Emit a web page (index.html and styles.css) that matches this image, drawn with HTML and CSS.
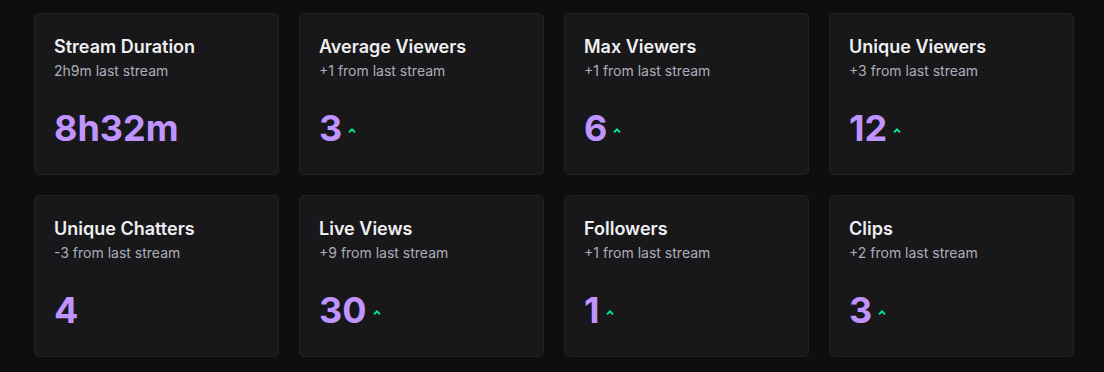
FILE: index.html
```html
<!DOCTYPE html>
<html>
<head>
<meta charset="utf-8">
<link rel="stylesheet" href="styles.css">
</head>
<body>
<div class="grid">
  <div class="card">
    <div class="title">Stream Duration</div>
    <div class="sub">2h9m last stream</div>
    <div class="value"><span class="num">8h32m</span></div>
  </div>
  <div class="card">
    <div class="title">Average Viewers</div>
    <div class="sub">+1 from last stream</div>
    <div class="value"><span class="num">3</span><svg class="up" viewBox="0 0 8 5" width="8" height="5"><path d="M1 4.3 L4 1.3 L7 4.3" fill="none" stroke="currentColor" stroke-width="1.7"/></svg></div>
  </div>
  <div class="card">
    <div class="title">Max Viewers</div>
    <div class="sub">+1 from last stream</div>
    <div class="value"><span class="num">6</span><svg class="up" viewBox="0 0 8 5" width="8" height="5"><path d="M1 4.3 L4 1.3 L7 4.3" fill="none" stroke="currentColor" stroke-width="1.7"/></svg></div>
  </div>
  <div class="card">
    <div class="title">Unique Viewers</div>
    <div class="sub">+3 from last stream</div>
    <div class="value"><span class="num">12</span><svg class="up" viewBox="0 0 8 5" width="8" height="5"><path d="M1 4.3 L4 1.3 L7 4.3" fill="none" stroke="currentColor" stroke-width="1.7"/></svg></div>
  </div>
  <div class="card">
    <div class="title">Unique Chatters</div>
    <div class="sub">-3 from last stream</div>
    <div class="value"><span class="num">4</span></div>
  </div>
  <div class="card">
    <div class="title">Live Views</div>
    <div class="sub">+9 from last stream</div>
    <div class="value"><span class="num">30</span><svg class="up" viewBox="0 0 8 5" width="8" height="5"><path d="M1 4.3 L4 1.3 L7 4.3" fill="none" stroke="currentColor" stroke-width="1.7"/></svg></div>
  </div>
  <div class="card">
    <div class="title">Followers</div>
    <div class="sub">+1 from last stream</div>
    <div class="value"><span class="num">1</span><svg class="up" viewBox="0 0 8 5" width="8" height="5"><path d="M1 4.3 L4 1.3 L7 4.3" fill="none" stroke="currentColor" stroke-width="1.7"/></svg></div>
  </div>
  <div class="card">
    <div class="title">Clips</div>
    <div class="sub">+2 from last stream</div>
    <div class="value"><span class="num">3</span><svg class="up" viewBox="0 0 8 5" width="8" height="5"><path d="M1 4.3 L4 1.3 L7 4.3" fill="none" stroke="currentColor" stroke-width="1.7"/></svg></div>
  </div>
</div>
</body>
</html>
```
FILE: styles.css
```css
html, body {
  margin: 0;
  padding: 0;
  background: #0e0e10;
  font-family: Inter, "Noto Sans", sans-serif;
}
.grid {
  display: grid;
  grid-template-columns: repeat(4, 1fr);
  gap: 20px;
  padding: 13px 30px 0 34px;
}
.card {
  background: #18181b;
  border: 1px solid #222226;
  border-radius: 5px;
  height: 162px;
  box-sizing: border-box;
  padding: 22px 19px 0 19px;
}
.title {
  color: #efeff1;
  font-size: 18px;
  font-weight: 600;
  line-height: 22px;
}
.sub {
  color: #adadb8;
  font-size: 14px;
  line-height: 20px;
  margin-top: 3px;
}
.value {
  display: flex;
  align-items: center;
  margin-top: 25px;
}
.num {
  color: #bf94ff;
  font-size: 36px;
  font-weight: 700;
  line-height: 44px;
}
.up {
  color: #00f593;
  margin-left: 6px;
  margin-top: 5px;
}
```
